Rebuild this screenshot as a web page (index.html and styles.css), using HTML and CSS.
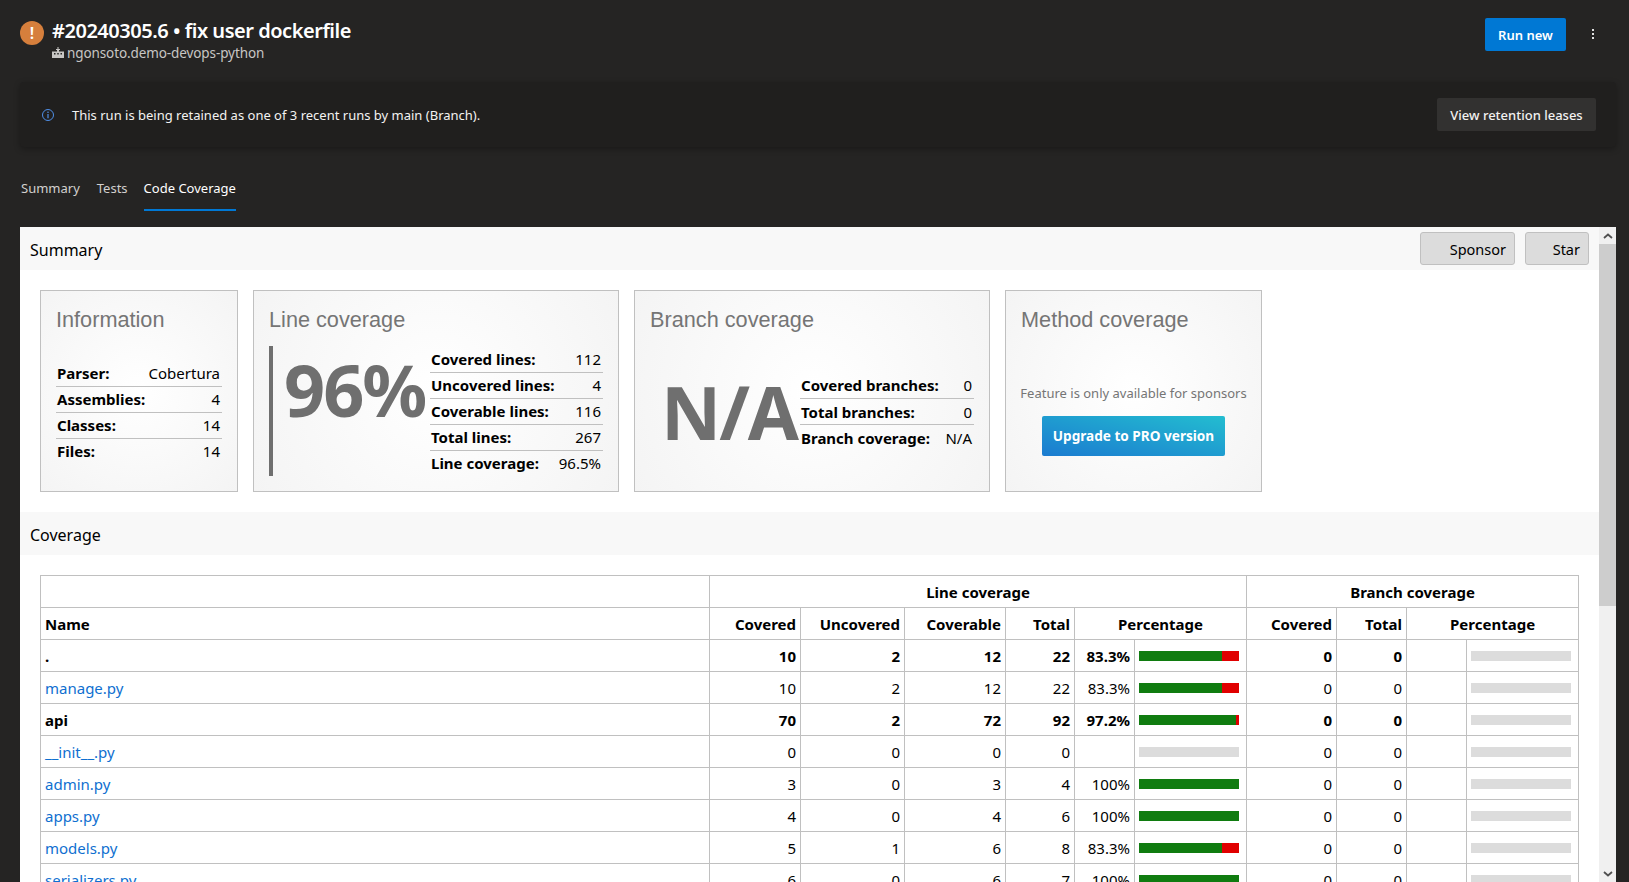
FILE: index.html
```html
<!DOCTYPE html>
<html lang="en">
<head>
<meta charset="UTF-8">
<title>#20240305.6 • fix user dockerfile</title>
<link rel="stylesheet" href="styles.css">
</head>
<body>
<header class="run-header">
  <span class="status-icon">!</span>
  <div class="run-title">
    <h1>#20240305.6 • fix user dockerfile</h1>
    <div class="repo">
      <svg class="repo-icon" viewBox="0 0 12 12"><path d="M5.500 0h1v2h1.500v1H7v1.500h5V11H0V4.500h5V3H4V2h1.500zM2 6v1.500h1.500V6zm3.250 0v1.500h1.500V6zM8.500 6v1.500H10V6z" fill="#c8c6c4"/></svg>
      ngonsoto.demo-devops-python
    </div>
  </div>
  <button class="btn-run">Run new</button>
  <span class="more">
    <i></i><i></i><i></i>
  </span>
</header>

<section class="banner">
  <svg class="info-icon" viewBox="0 0 14 14"><circle cx="7" cy="7" r="5.500" fill="none" stroke="#4f8fe8" stroke-width="1"/><path d="M7 6v4.200" stroke="#4f8fe8" stroke-width="1.200"/><circle cx="7" cy="4.300" r=".8" fill="#4f8fe8"/></svg>
  <span class="banner-text">This run is being retained as one of 3 recent runs by main (Branch).</span>
  <button class="btn-lease">View retention leases</button>
</section>

<nav class="tabs">
  <a>Summary</a>
  <a>Tests</a>
  <a class="active">Code Coverage</a>
</nav>

<div class="frame">
  <main class="report">
    <div class="section-head">
      <span>Summary</span>
      <button class="btn-grey btn-sponsor">Sponsor</button>
      <button class="btn-grey btn-star">Star</button>
    </div>

    <div class="cards">
      <div class="card card-info">
        <h2>Information</h2>
        <div class="card-body">
          <table class="stats">
            <tr><th>Parser:</th><td>Cobertura</td></tr>
            <tr><th>Assemblies:</th><td>4</td></tr>
            <tr><th>Classes:</th><td>14</td></tr>
            <tr><th>Files:</th><td>14</td></tr>
          </table>
        </div>
      </div>

      <div class="card card-line">
        <h2>Line coverage</h2>
        <div class="card-body">
          <div class="large large-line">96%</div>
          <table class="stats">
            <tr><th>Covered lines:</th><td>112</td></tr>
            <tr><th>Uncovered lines:</th><td>4</td></tr>
            <tr><th>Coverable lines:</th><td>116</td></tr>
            <tr><th>Total lines:</th><td>267</td></tr>
            <tr><th>Line coverage:</th><td>96.5%</td></tr>
          </table>
        </div>
      </div>

      <div class="card card-branch">
        <h2>Branch coverage</h2>
        <div class="card-body">
          <div class="large large-branch">N/A</div>
          <table class="stats">
            <tr><th>Covered branches:</th><td>0</td></tr>
            <tr><th>Total branches:</th><td>0</td></tr>
            <tr><th>Branch coverage:</th><td>N/A</td></tr>
          </table>
        </div>
      </div>

      <div class="card card-method">
        <h2>Method coverage</h2>
        <div class="card-body">
          <p>Feature is only available for sponsors</p>
          <a class="btn-pro">Upgrade to PRO version</a>
        </div>
      </div>
    </div>

    <div class="section-head">
      <span>Coverage</span>
    </div>

    <div class="table-wrap">
      <table class="coverage">
        <colgroup>
          <col class="c-name"><col class="c-cov"><col class="c-unc"><col class="c-cvb"><col class="c-tot">
          <col class="c-pct"><col class="c-bar"><col class="c-bcov"><col class="c-btot"><col class="c-pct2"><col class="c-bar">
        </colgroup>
        <thead>
          <tr>
            <th></th>
            <th class="center" colspan="6">Line coverage</th>
            <th class="center" colspan="4">Branch coverage</th>
          </tr>
          <tr>
            <th class="left">Name</th>
            <th>Covered</th><th>Uncovered</th><th>Coverable</th><th>Total</th>
            <th class="center" colspan="2">Percentage</th>
            <th>Covered</th><th>Total</th>
            <th class="center" colspan="2">Percentage</th>
          </tr>
        </thead>
        <tbody>
          <tr class="group">
            <td class="left">.</td><td>10</td><td>2</td><td>12</td><td>22</td><td>83.3%</td>
            <td><div class="bar"><i class="fill" style="width:83%"></i></div></td>
            <td>0</td><td>0</td><td></td><td><div class="bar"></div></td>
          </tr>
          <tr>
            <td class="left"><a>manage.py</a></td><td>10</td><td>2</td><td>12</td><td>22</td><td>83.3%</td>
            <td><div class="bar"><i class="fill" style="width:83%"></i></div></td>
            <td>0</td><td>0</td><td></td><td><div class="bar"></div></td>
          </tr>
          <tr class="group">
            <td class="left">api</td><td>70</td><td>2</td><td>72</td><td>92</td><td>97.2%</td>
            <td><div class="bar"><i class="fill" style="width:97%"></i></div></td>
            <td>0</td><td>0</td><td></td><td><div class="bar"></div></td>
          </tr>
          <tr>
            <td class="left"><a>__init__.py</a></td><td>0</td><td>0</td><td>0</td><td>0</td><td></td>
            <td><div class="bar"></div></td>
            <td>0</td><td>0</td><td></td><td><div class="bar"></div></td>
          </tr>
          <tr>
            <td class="left"><a>admin.py</a></td><td>3</td><td>0</td><td>3</td><td>4</td><td>100%</td>
            <td><div class="bar"><i class="fill" style="width:100%"></i></div></td>
            <td>0</td><td>0</td><td></td><td><div class="bar"></div></td>
          </tr>
          <tr>
            <td class="left"><a>apps.py</a></td><td>4</td><td>0</td><td>4</td><td>6</td><td>100%</td>
            <td><div class="bar"><i class="fill" style="width:100%"></i></div></td>
            <td>0</td><td>0</td><td></td><td><div class="bar"></div></td>
          </tr>
          <tr>
            <td class="left"><a>models.py</a></td><td>5</td><td>1</td><td>6</td><td>8</td><td>83.3%</td>
            <td><div class="bar"><i class="fill" style="width:83%"></i></div></td>
            <td>0</td><td>0</td><td></td><td><div class="bar"></div></td>
          </tr>
          <tr>
            <td class="left"><a>serializers.py</a></td><td>6</td><td>0</td><td>6</td><td>7</td><td>100%</td>
            <td><div class="bar"><i class="fill" style="width:100%"></i></div></td>
            <td>0</td><td>0</td><td></td><td><div class="bar"></div></td>
          </tr>
        </tbody>
      </table>
    </div>
  </main>

  <div class="scrollbar">
    <span class="arrow">
      <svg viewBox="0 0 10 6"><path d="M1 5l4-3.500L9 5" fill="none" stroke="#505050" stroke-width="1.800"/></svg>
    </span>
    <div class="thumb"></div>
    <span class="arrow arrow-down">
      <svg viewBox="0 0 10 6"><path d="M1 1l4 3.500L9 1" fill="none" stroke="#505050" stroke-width="1.800"/></svg>
    </span>
  </div>
</div>
</body>
</html>
```

FILE: styles.css
```css
* {
  box-sizing: border-box;
}
html, body {
  height: 100%;
}
body {
  margin: 0;
  background-color: #252423;
  color: #fff;
  font-family: 'Noto Sans', 'Open Sans', sans-serif;
  display: flex;
  flex-direction: column;
  overflow: hidden;
}
button {
  font-family: inherit;
  border: 0;
}

/* dark page header */
.run-header {
  display: flex;
  align-items: flex-start;
  height: 82px;
  padding: 18px 35px 0 20px;
}
.status-icon {
  width: 24px;
  height: 24px;
  margin-top: 3px;
  border-radius: 50%;
  background-color: #d67f3c;
  color: #fff;
  font-size: 16px;
  font-weight: 600;
  line-height: 24px;
  text-align: center;
}
.run-title {
  flex: 1;
  margin-left: 8px;
}
.run-title h1 {
  margin: 0;
  font-size: 20px;
  font-weight: 600;
  line-height: 26px;
  letter-spacing: -0.47px;
}
.repo {
  display: flex;
  align-items: center;
  gap: 3px;
  color: #c8c6c4;
  font-size: 13.5px;
  line-height: 18px;
  letter-spacing: -0.1px;
}
.repo-icon {
  width: 12px;
  height: 12px;
}
.btn-run {
  width: 81px;
  height: 33px;
  margin-right: 1px;
  background-color: #0078d4;
  color: #fff;
  border-radius: 2px;
  font-size: 13px;
  font-weight: 600;
}
.more {
  display: flex;
  flex-direction: column;
  gap: 2px;
  margin: 11px 0 0 25px;
}
.more i {
  width: 2px;
  height: 2px;
  background-color: #e0e0e0;
}

.banner {
  display: flex;
  align-items: center;
  height: 65px;
  padding: 0 20px 0 21px;
  margin-right: 13px;
  margin-left: 20px;
  background-color: #201f1e;
  border-radius: 4px;
  box-shadow: 0 2px 6px rgba(0, 0, 0, 0.3);
}
.info-icon {
  width: 14px;
  height: 14px;
}
.banner-text {
  flex: 1;
  margin-left: 17px;
  font-size: 13px;
  color: #f3f2f1;
}
.btn-lease {
  width: 159px;
  height: 33px;
  background-color: #323130;
  color: #f3f2f1;
  border-radius: 2px;
  font-size: 13px;
  font-weight: 500;
}

.tabs {
  display: flex;
  gap: 17px;
  height: 80px;
  padding: 28px 0 16px 21px;
  font-size: 13px;
  color: #d2d0ce;
}
.tabs a {
  height: 36px;
  line-height: 26px;
}
.tabs a.active {
  margin-left: -1px;
  color: #fff;
  border-bottom: 2px solid #0078d4;
}

/* embedded report frame */
.frame {
  flex: 1;
  display: flex;
  min-height: 0;
  margin: 0 13px 0 20px;
}
.report {
  flex: 1;
  min-width: 0;
  overflow: hidden;
  background-color: #fff;
  color: #000;
  font-size: 16px;
}
.scrollbar {
  display: flex;
  flex-direction: column;
  width: 17px;
  background-color: #f0f0f0;
}
.arrow {
  display: flex;
  align-items: center;
  justify-content: center;
  height: 17px;
}
.arrow svg {
  width: 10px;
  height: 6px;
}
.thumb {
  height: 362px;
  background-color: #cdcdcd;
}
.arrow-down {
  margin-top: auto;
}

.section-head {
  display: flex;
  align-items: center;
  height: 43px;
  padding: 0 10px;
  background-color: #f8f8f8;
  font-size: 16px;
}
.section-head span {
  flex: 1;
  padding-top: 2px;
}
.btn-grey {
  height: 33px;
  padding: 0 8px 0 0;
  background-color: #dcdcdc;
  border: 1px solid #c0c0c0;
  border-radius: 3px;
  color: #000;
  font-size: 14.5px;
  text-align: right;
}
.btn-sponsor {
  width: 95px;
}
.btn-star {
  width: 64px;
  margin-left: 10px;
}

/* summary cards */
.cards {
  display: flex;
  gap: 15px;
  padding: 20px;
}
.card {
  display: flex;
  flex-direction: column;
  height: 202px;
  padding: 0 15px 15px;
  border: 1px solid #c0c0c0;
  background: radial-gradient(circle, #fff 0%, #f4f4f4 100%);
}
.card h2 {
  height: 56px;
  margin: 0;
  padding-top: 14px;
  font-family: 'Liberation Sans', Arial, sans-serif;
  font-size: 21.7px;
  font-weight: 400;
  line-height: 30px;
  color: #757575;
}
.card-body {
  flex: 1;
  display: flex;
  align-items: center;
}
.card-info {
  width: 198px;
}
.card-line {
  width: 366px;
}
.card-branch {
  width: 356px;
}
.card-method {
  width: 257px;
}
.card-info .stats {
  width: 166px;
  margin-top: 1px;
}
.card-line .stats {
  width: 173px;
  flex: none;
}
.card-branch .stats {
  width: 174px;
  flex: none;
}
.large {
  flex: 1;
  color: #6f6f6f;
  font-weight: 700;
  white-space: nowrap;
}
.large-line {
  align-self: stretch;
  padding: 3px 0 0 11px;
  border-left: 4px solid #6f6f6f;
  font-size: 72px;
  line-height: 80px;
  letter-spacing: -2px;
}
.large-branch {
  padding-left: 11px;
  font-size: 74px;
  line-height: 80px;
  letter-spacing: -2px;
}
.stats {
  border-collapse: collapse;
  font-size: 15px;
}
.stats th {
  padding: 0 1px;
  font-weight: 700;
  text-align: left;
  white-space: nowrap;
}
.stats td {
  padding: 0 2px 0 0;
  text-align: right;
  white-space: nowrap;
}
.stats tr {
  height: 26px;
  border-bottom: 1px solid #c0c0c0;
}
.stats tr:last-child {
  border-bottom: 0;
}
.card-method .card-body {
  flex-direction: column;
  justify-content: flex-start;
}
.card-method p {
  margin: 37px 0 14px;
  color: #757575;
  font-size: 13px;
  white-space: nowrap;
}
.btn-pro {
  width: 183px;
  height: 40px;
  border-radius: 2px;
  background: linear-gradient(to top right, #1b7bd0, #23bdd0);
  color: #fff;
  font-size: 13.6px;
  font-weight: 700;
  line-height: 40px;
  text-align: center;
}

/* coverage table */
.table-wrap {
  padding: 20px 20px 0;
}
.coverage {
  width: 1539px;
  table-layout: fixed;
  border-collapse: collapse;
  font-size: 15px;
}
.coverage th,
.coverage td {
  height: 32px;
  padding: 0 4px;
  border: 1px solid #c0c0c0;
  text-align: right;
  white-space: nowrap;
}
.coverage th.left,
.coverage td.left {
  text-align: left;
}
.coverage th.center {
  text-align: center;
}
.coverage .group td {
  font-weight: 700;
}
.coverage a {
  color: #0f6fd0;
}
.c-name { width: 669px; }
.c-cov { width: 91px; }
.c-unc { width: 104px; }
.c-cvb { width: 101px; }
.c-tot { width: 69px; }
.c-pct { width: 60px; }
.c-bar { width: 112px; }
.c-bcov { width: 90px; }
.c-btot { width: 70px; }
.c-pct2 { width: 60px; }
.bar {
  width: 100px;
  height: 10px;
  background-color: #dcdcdc;
}
.bar:has(.fill) {
  background-color: #e00000;
}
.fill {
  display: block;
  height: 10px;
  background-color: #107c10;
}
```
